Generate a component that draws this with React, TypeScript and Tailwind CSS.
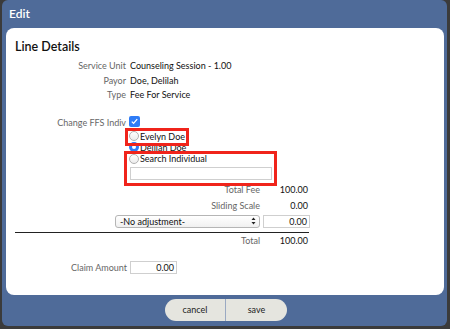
export default function App() {
  return (
    <div className="w-[450px] h-[329px] bg-[#3b3b3b] pl-[2px] pt-0 font-['Lato','Liberation_Sans',sans-serif]">
      <div className="w-[445px] h-[326px] bg-[#4f6b99] rounded-[6px] flex flex-col">
        <div className="h-[28px] pl-[7px] pt-[6px] text-[12px] leading-[16px] font-semibold text-white">Edit</div>
        <div className="relative ml-[4px] mr-[3px] h-[267px] bg-white rounded-[8px] pl-[9px] pt-[11px]">
          <h1 className="text-[12.5px] leading-[16px] font-semibold text-[#111]">Line Details</h1>

          <div className="mt-[4px] grid grid-cols-[111px_1fr] gap-x-[4px] text-[9px] leading-[14.5px]">
            <span className="text-right text-[#666]">Service Unit</span>
            <span className="text-[#111]">Counseling Session - 1.00</span>
            <span className="text-right text-[#666]">Payor</span>
            <span className="text-[#111]">Doe, Delilah</span>
            <span className="text-right text-[#666]">Type</span>
            <span className="text-[#111]">Fee For Service</span>
          </div>

          <div className="mt-[13px] flex items-center gap-[3px] h-[11px] text-[9px] leading-[11px]">
            <span className="w-[111px] text-right text-[#666] pt-[3px]">Change FFS Indiv</span>
            <span className="w-[11px] h-[11px] rounded-[2px] bg-[#2f7cf6] flex items-center justify-center">
              <svg width="9" height="9" viewBox="0 0 9 9">
                <path d="M1.8 4.6 L3.6 6.4 L7.2 2.2" fill="none" stroke="white" strokeWidth="1.3" />
              </svg>
            </span>
          </div>

          <div className="mt-[4px] ml-[114px] flex flex-col text-[9px] leading-[11px] text-[#111]">
            <div className="h-[11px] flex items-center gap-[1px]">
              <Radio />
              <span>Evelyn Doe</span>
            </div>
            <div className="h-[11px] flex items-center gap-[1px]">
              <Radio checked />
              <span>Delilah Doe</span>
            </div>
            <div className="mt-[0.5px] h-[11px] flex items-center gap-[1px]">
              <Radio />
              <span>Search Individual</span>
            </div>
            <div className="mt-[3px] ml-[1px] w-[142px] h-[13px] border border-[#cfcfcf] bg-white" />
          </div>

          <div className="mt-[3px] grid grid-cols-[245px_47px] gap-x-[3px] text-[9px] leading-[14px]">
            <span className="text-right text-[#666]">Total Fee</span>
            <span className="text-right text-[#111] pr-[2px]">100.00</span>
            <span className="mt-[1.5px] text-right text-[#666]">Sliding Scale</span>
            <span className="mt-[1.5px] text-right text-[#111] pr-[2px]">0.00</span>
            <div className="mt-[2px] flex justify-end">
              <div className="w-[145px] h-[13px] rounded-[3px] border border-[#b5b5b5] bg-gradient-to-b from-white to-[#f0f0f0] flex items-center justify-between pl-[4px] pr-[3px] text-[9px] leading-[11px] text-[#111]">
                <span>-No adjustment-</span>
                <svg width="5" height="8" viewBox="0 0 5 8">
                  <path d="M0.5 3 L2.5 0.5 L4.5 3 Z M0.5 5 L2.5 7.5 L4.5 5 Z" fill="#222" />
                </svg>
              </div>
            </div>
            <div className="mt-[2px] h-[13px] border border-[#cfcfcf] text-right pr-[2px] text-[9px] leading-[11px] text-[#111]">0.00</div>
          </div>

          <div className="mt-[4px] w-[294px] h-px bg-[#222]" />

          <div className="grid grid-cols-[245px_47px] gap-x-[3px] text-[9px] leading-[14px] pt-[1px]">
            <span className="text-right text-[#666]">Total</span>
            <span className="text-right text-[#111] pr-[2px]">100.00</span>
          </div>

          <div className="mt-[13px] flex items-center gap-[3px] text-[9px] leading-[13px]">
            <span className="w-[112px] text-right text-[#666]">Claim Amount</span>
            <div className="w-[47px] h-[13px] border border-[#cfcfcf] text-right pr-[2px] leading-[11px] text-[#111]">0.00</div>
          </div>

          <div className="absolute left-[119px] top-[100px] w-[64px] h-[18px] border-[3px] border-[#f0241b]" />
          <div className="absolute left-[118px] top-[123px] w-[153px] h-[35px] border-[3px] border-[#f0241b]" />
        </div>

        <div className="mt-[4px] pl-[3px] flex justify-center">
          <div className="flex h-[22px] text-[9px] text-[#222]">
            <span className="w-[61px] rounded-l-full bg-[#e5e5df] flex items-center justify-center border-r border-[#9aa9c2]">cancel</span>
            <span className="w-[61px] rounded-r-full bg-[#e5e5df] flex items-center justify-center">save</span>
          </div>
        </div>
      </div>
    </div>
  );
}

function Radio({ checked = false }: { checked?: boolean }) {
  if (checked) {
    return (
      <span className="w-[10px] h-[10px] rounded-full bg-[#2f7cf6] flex items-center justify-center">
        <span className="w-[4px] h-[4px] rounded-full bg-white" />
      </span>
    );
  }
  return <span className="w-[10px] h-[10px] rounded-full border border-[#b0b0b0] bg-gradient-to-b from-white to-[#ececec]" />;
}
